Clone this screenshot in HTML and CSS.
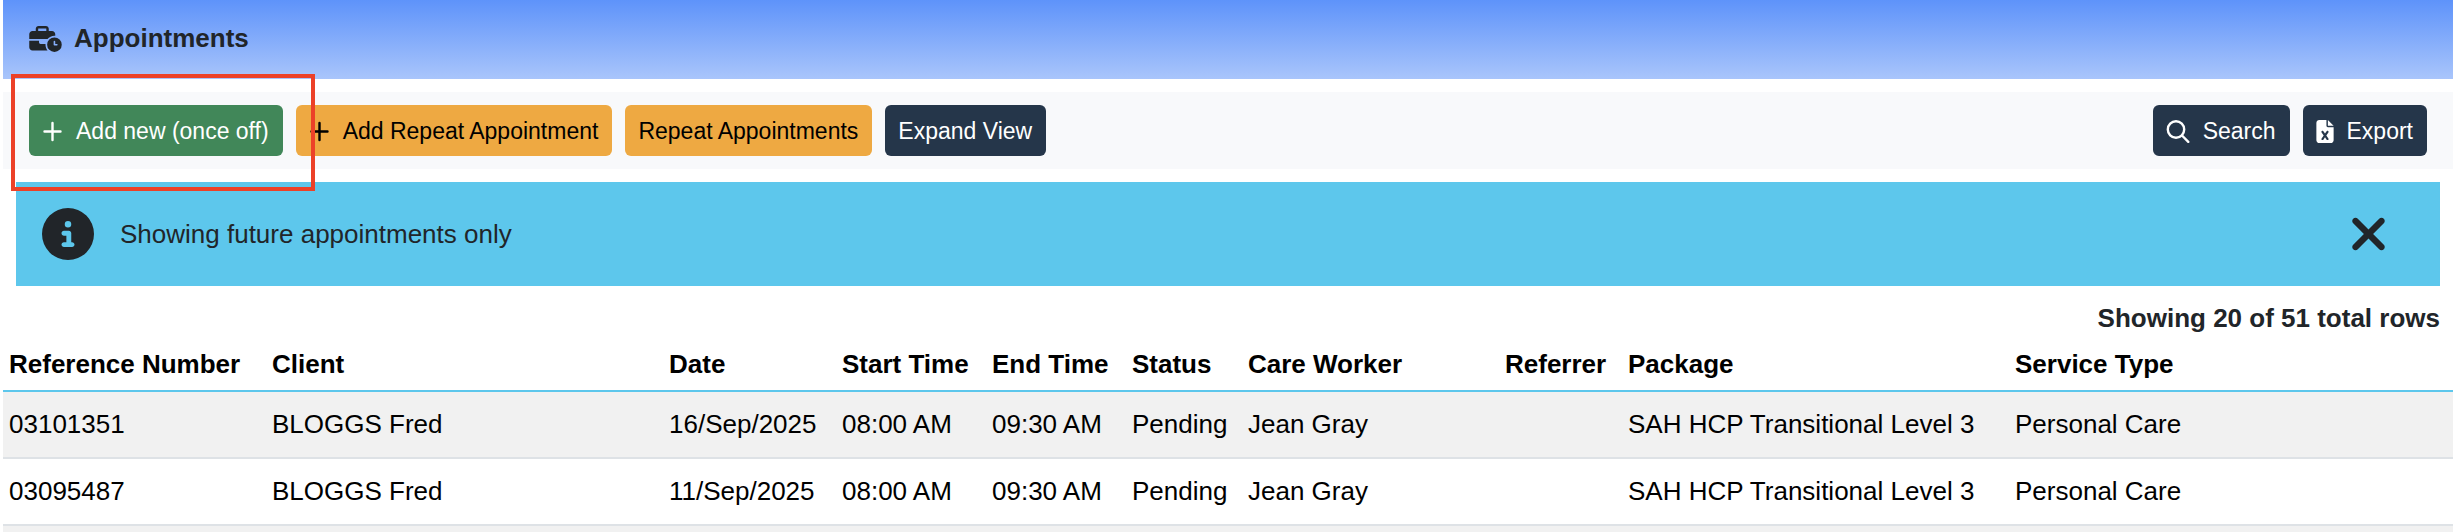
FILE: index.html
```
<!DOCTYPE html>
<html lang="en">
<head>
  <meta charset="UTF-8">
  <title>Appointments</title>
  <link rel="stylesheet" href="styles.css">
</head>
<body>

<div class="page">

  <header class="page-header">
    <svg class="icon-title" viewBox="0 0 640 512" aria-hidden="true"><path d="M184 48H328c4.400 0 8 3.600 8 8V96H176V56c0-4.400 3.600-8 8-8zm-56 8V96H64C28.700 96 0 124.700 0 160v96H192 352h8.200c32.300-39.100 81.100-64 135.800-64c5.400 0 10.700 .2 16 .7V160c0-35.300-28.700-64-64-64H384V56c0-30.900-25.100-56-56-56H184c-30.900 0-56 25.100-56 56zM320 352H224c-17.700 0-32-14.300-32-32V288H0V416c0 35.300 28.700 64 64 64H360.200C335.100 449.600 320 410.500 320 368c0-5.400 .2-10.700 .7-16l-.7 0zm320 16a144 144 0 1 0 -288 0 144 144 0 1 0 288 0zM496 288c8.800 0 16 7.200 16 16v48h32c8.800 0 16 7.200 16 16s-7.200 16-16 16H496c-8.800 0-16-7.200-16-16V304c0-8.800 7.200-16 16-16z"/></svg>
    <h1>Appointments</h1>
  </header>

  <div class="toolbar">
    <div class="highlight">
      <button type="button" class="btn btn-success">
        <svg class="icon-plus" viewBox="0 0 20 23" aria-hidden="true"><path d="M10 3v17M2 11.500h16"/></svg>
        Add new (once off)
      </button>
    </div>
    <button type="button" class="btn btn-warning">
      <svg class="icon-plus" viewBox="0 0 20 23" aria-hidden="true"><path d="M10 3v17M2 11.500h16"/></svg>
      Add Repeat Appointment
    </button>
    <button type="button" class="btn btn-warning">Repeat Appointments</button>
    <button type="button" class="btn btn-dark">Expand View</button>
    <div class="toolbar-right">
      <button type="button" class="btn btn-dark">
        <svg class="icon-search" viewBox="0 0 23 23" aria-hidden="true"><circle cx="9.500" cy="9.500" r="8.200"/><path d="M15.500 15.500l6.300 6.300"/></svg>
        Search
      </button>
      <button type="button" class="btn btn-dark">
        <svg class="icon-file" viewBox="0 0 384 512" aria-hidden="true"><path d="M64 0C28.700 0 0 28.700 0 64V448c0 35.300 28.700 64 64 64H320c35.300 0 64-28.700 64-64V160H256c-17.700 0-32-14.300-32-32V0H64zM256 0V128H384L256 0zM155.700 250.200L192 302.100l36.300-51.900c7.600-10.900 22.600-13.500 33.400-5.900s13.500 22.600 5.900 33.400L221.300 344l46.400 66.200c7.600 10.900 5 25.800-5.900 33.400s-25.800 5-33.400-5.900L192 385.800l-36.300 51.900c-7.600 10.900-22.600 13.500-33.400 5.900s-13.500-22.600-5.900-33.400L162.700 344l-46.400-66.200c-7.600-10.900-5-25.800 5.900-33.400s25.800-5 33.400 5.900z"/></svg>
        Export
      </button>
    </div>
  </div>

  <div class="alert">
    <svg class="icon-info" viewBox="0 0 512 512" aria-hidden="true"><path d="M256 512A256 256 0 1 0 256 0a256 256 0 1 0 0 512zM216 336h24V272H216c-13.300 0-24-10.700-24-24s10.700-24 24-24h48c13.300 0 24 10.700 24 24v88h8c13.300 0 24 10.700 24 24s-10.700 24-24 24H216c-13.300 0-24-10.700-24-24s10.700-24 24-24zm40-208a32 32 0 1 1 0 64 32 32 0 1 1 0-64z"/></svg>
    <span>Showing future appointments only</span>
    <button type="button" class="close" aria-label="Close">
      <svg class="icon-close" viewBox="0 0 384 512" aria-hidden="true"><path d="M342.600 150.600c12.500-12.500 12.500-32.800 0-45.300s-32.800-12.500-45.300 0L192 210.700 86.600 105.400c-12.500-12.500-32.800-12.500-45.300 0s-12.500 32.800 0 45.300L146.700 256 41.400 361.400c-12.500 12.500-12.500 32.800 0 45.300s32.800 12.500 45.300 0L192 301.300 297.400 406.600c12.500 12.500 32.800 12.500 45.300 0s12.500-32.800 0-45.300L237.300 256 342.600 150.600z"/></svg>
    </button>
  </div>

  <p class="row-count">Showing 20 of 51 total rows</p>

  <table class="appointments">
    <colgroup>
      <col class="col-ref">
      <col class="col-client">
      <col class="col-date">
      <col class="col-start">
      <col class="col-end">
      <col class="col-status">
      <col class="col-worker">
      <col class="col-referrer">
      <col class="col-package">
      <col>
    </colgroup>
    <thead>
      <tr>
        <th>Reference Number</th>
        <th>Client</th>
        <th>Date</th>
        <th>Start Time</th>
        <th>End Time</th>
        <th>Status</th>
        <th>Care Worker</th>
        <th>Referrer</th>
        <th>Package</th>
        <th>Service Type</th>
      </tr>
    </thead>
    <tbody>
      <tr>
        <td>03101351</td>
        <td>BLOGGS Fred</td>
        <td>16/Sep/2025</td>
        <td>08:00 AM</td>
        <td>09:30 AM</td>
        <td>Pending</td>
        <td>Jean Gray</td>
        <td></td>
        <td>SAH HCP Transitional Level 3</td>
        <td>Personal Care</td>
      </tr>
      <tr>
        <td>03095487</td>
        <td>BLOGGS Fred</td>
        <td>11/Sep/2025</td>
        <td>08:00 AM</td>
        <td>09:30 AM</td>
        <td>Pending</td>
        <td>Jean Gray</td>
        <td></td>
        <td>SAH HCP Transitional Level 3</td>
        <td>Personal Care</td>
      </tr>
      <tr>
        <td colspan="10"></td>
      </tr>
    </tbody>
  </table>

</div>

</body>
</html>
```

FILE: styles.css
```
* {
  box-sizing: border-box;
}

body {
  margin: 0;
  font-family: Arial, "Liberation Sans", sans-serif;
  font-size: 26px;
  line-height: 39px;
  color: #212529;
  background-color: #fff;
}

.page {
  height: 100vh;
  overflow: hidden;
  padding: 0 3px;
}

svg {
  fill: currentColor;
  flex: none;
}

/* header */
.page-header {
  display: flex;
  align-items: center;
  gap: 12px;
  padding: 19px 26px 21px;
  background: linear-gradient(#5e93fa, #a9c5fb);
}

.page-header h1 {
  margin: 0;
  font-size: 26px;
  font-weight: bold;
}

.icon-title {
  width: 33px;
  height: 26px;
}

/* toolbar */
.toolbar {
  display: flex;
  gap: 13px;
  margin: 13px 0;
  padding: 13px 26px;
  background-color: #f8f9fb;
}

.toolbar-right {
  display: flex;
  gap: 13px;
  margin-left: auto;
}

.btn {
  display: flex;
  align-items: center;
  gap: 13px;
  height: 51px;
  padding: 1px 14px 0 13px;
  border: none;
  border-radius: 6px;
  font-family: inherit;
  font-size: 23px;
  white-space: nowrap;
  cursor: pointer;
}

.btn-success {
  background-color: #418759;
  color: #fff;
}

.btn-warning {
  background-color: #eea942;
  color: #000;
}

.btn-dark {
  background-color: #25364a;
  color: #fff;
}

.icon-plus,
.icon-search {
  height: 23px;
  fill: none;
  stroke: currentColor;
  stroke-width: 2.4;
  stroke-linecap: round;
}

.icon-plus {
  width: 21px;
}

.icon-search {
  width: 24px;
}

.icon-file {
  width: 18px;
  height: 23px;
}

/* red frame around the main action */
.highlight {
  position: relative;
}

.highlight::after {
  content: "";
  position: absolute;
  inset: -31px -32px -35px -18px;
  border: 4px solid #ec4128;
  pointer-events: none;
}

/* alert */
.alert {
  display: flex;
  align-items: center;
  gap: 26px;
  margin: 0 13px 13px;
  padding: 26px 52px 26px 26px;
  background-color: #5dc7ec;
}

.icon-info {
  width: 52px;
  height: 52px;
}

.close {
  display: flex;
  margin-left: auto;
  padding: 0;
  border: none;
  background: none;
  color: inherit;
  cursor: pointer;
}

.icon-close {
  width: 39px;
  height: 52px;
}

.row-count {
  margin: 0 13px;
  text-align: right;
  font-weight: bold;
}

/* table */
.appointments {
  width: 100%;
  table-layout: fixed;
  border-collapse: separate;
  border-spacing: 0;
  color: #000;
}

.appointments th {
  padding: 7px 6px 6px;
  border-bottom: 2px solid #5dc7ec;
  text-align: left;
  white-space: nowrap;
}

.appointments td {
  height: 67px;
  padding: 13px 6px;
  border-bottom: 2px solid #dee2e6;
  white-space: nowrap;
}

.appointments tbody tr:nth-child(odd) {
  background-color: #f1f1f1;
}

.col-ref { width: 263px; }
.col-client { width: 397px; }
.col-date { width: 173px; }
.col-start { width: 150px; }
.col-end { width: 140px; }
.col-status { width: 116px; }
.col-worker { width: 257px; }
.col-referrer { width: 123px; }
.col-package { width: 387px; }
```
